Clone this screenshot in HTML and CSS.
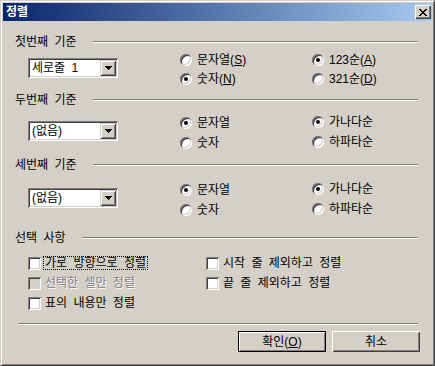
FILE: index.html
```html
<!DOCTYPE html>
<html lang="ko">
  <head>
    <meta charset="UTF-8" />
    <title>정렬</title>
    <link rel="stylesheet" href="styles.css">
  </head>
  <body>
    <div class="window">
      <div class="titlebar">
        <span class="title">정렬</span>
        <span class="close-btn">
          <svg width="8" height="7" viewBox="0 0 8 7" shape-rendering="crispEdges">
            <path d="M0 0h2v1h-2zM6 0h2v1h-2zM1 1h2v1h-2zM5 1h2v1h-2zM2 2h4v1h-4zM3 3h2v1h-2zM2 4h4v1h-4zM1 5h2v1h-2zM5 5h2v1h-2zM0 6h2v1h-2zM6 6h2v1h-2z" fill="#000"/>
          </svg>
        </span>
      </div>

      <div class="content">
        <section class="group group-1">
          <div class="group-head"><span>첫번째 기준</span></div>
          <div class="group-row">
            <div class="combo">
              <span class="combo-text">세로줄 1</span>
              <span class="combo-btn"><svg width="7" height="4" viewBox="0 0 7 4" shape-rendering="crispEdges"><path d="M0 0h7v1h-7zM1 1h5v1h-5zM2 2h3v1h-3zM3 3h1v1h-1z" fill="#000"/></svg></span>
            </div>
            <div class="radio-col">
              <div class="radio-item"><span class="radio"></span><span>문자열(<u>S</u>)</span></div>
              <div class="radio-item"><span class="radio checked"></span><span>숫자(<u>N</u>)</span></div>
            </div>
            <div class="radio-col">
              <div class="radio-item"><span class="radio checked"></span><span>123순(<u>A</u>)</span></div>
              <div class="radio-item"><span class="radio"></span><span>321순(<u>D</u>)</span></div>
            </div>
          </div>
        </section>

        <section class="group group-2">
          <div class="group-head"><span>두번째 기준</span></div>
          <div class="group-row">
            <div class="combo">
              <span class="combo-text">(없음)</span>
              <span class="combo-btn"><svg width="7" height="4" viewBox="0 0 7 4" shape-rendering="crispEdges"><path d="M0 0h7v1h-7zM1 1h5v1h-5zM2 2h3v1h-3zM3 3h1v1h-1z" fill="#000"/></svg></span>
            </div>
            <div class="radio-col">
              <div class="radio-item"><span class="radio checked"></span><span>문자열</span></div>
              <div class="radio-item"><span class="radio"></span><span>숫자</span></div>
            </div>
            <div class="radio-col shifted">
              <div class="radio-item"><span class="radio checked"></span><span>가나다순</span></div>
              <div class="radio-item"><span class="radio"></span><span>하파타순</span></div>
            </div>
          </div>
        </section>

        <section class="group group-3">
          <div class="group-head"><span>세번째 기준</span></div>
          <div class="group-row">
            <div class="combo">
              <span class="combo-text">(없음)</span>
              <span class="combo-btn"><svg width="7" height="4" viewBox="0 0 7 4" shape-rendering="crispEdges"><path d="M0 0h7v1h-7zM1 1h5v1h-5zM2 2h3v1h-3zM3 3h1v1h-1z" fill="#000"/></svg></span>
            </div>
            <div class="radio-col">
              <div class="radio-item"><span class="radio checked"></span><span>문자열</span></div>
              <div class="radio-item"><span class="radio"></span><span>숫자</span></div>
            </div>
            <div class="radio-col shifted">
              <div class="radio-item"><span class="radio checked"></span><span>가나다순</span></div>
              <div class="radio-item"><span class="radio"></span><span>하파타순</span></div>
            </div>
          </div>
        </section>

        <section class="group group-4">
          <div class="group-head"><span>선택 사항</span></div>
          <div class="check-grid">
            <div class="check-item"><span class="check"></span><span class="focus">가로 방향으로 정렬</span></div>
            <div class="check-item"><span class="check"></span><span>시작 줄 제외하고 정렬</span></div>
            <div class="check-item disabled"><span class="check"></span><span>선택한 셀만 정렬</span></div>
            <div class="check-item"><span class="check"></span><span>끝 줄 제외하고 정렬</span></div>
            <div class="check-item"><span class="check"></span><span>표의 내용만 정렬</span></div>
          </div>
        </section>

        <div class="sep"></div>

        <div class="buttons">
          <button class="btn default">확인(<u>O</u>)</button>
          <button class="btn">취소</button>
        </div>
      </div>
    </div>
  </body>
</html>
```

FILE: styles.css
```css
body {
  margin: 0;
  font-family: "Liberation Sans", "Noto Sans CJK KR", sans-serif;
  font-size: 12px;
  line-height: 1;
  word-spacing: 3px;
  color: #000;
}
.window {
  width: 435px;
  height: 366px;
  box-sizing: border-box;
  background: #d4d0c8;
  border: 1px solid;
  border-color: #d4d0c8 #404040 #404040 #d4d0c8;
  box-shadow: inset 1px 1px #fff, inset -1px -1px #808080;
  padding: 2px;
  display: flex;
  flex-direction: column;
}
.titlebar {
  height: 18px;
  flex: none;
  display: flex;
  align-items: center;
  justify-content: space-between;
  padding: 0 1px 0 3px;
  background: linear-gradient(to right, #0a246a, #a6caf0);
}
.title {
  color: #fff;
  font-weight: bold;
}
.close-btn {
  width: 16px;
  height: 14px;
  box-sizing: border-box;
  display: flex;
  align-items: center;
  justify-content: center;
  background: #d4d0c8;
  box-shadow: inset 1px 1px #fff, inset -1px -1px #404040, inset -2px -2px #808080;
}
.close-btn svg {
  display: block;
}
.content {
  padding: 14px 14px 0 12px;
}
.group-head {
  height: 14px;
  display: flex;
  align-items: center;
}
.group-head::after {
  content: "";
  flex: 1;
  margin-left: 16px;
  border-top: 1px solid #808080;
  border-bottom: 1px solid #fff;
}
.group-1 { height: 58px; }
.group-2 { height: 65px; }
.group-3 { height: 73px; }
.group-row {
  display: grid;
  grid-template-columns: 165px 132px 1fr;
  align-items: start;
}
.group-1 .group-row { padding-top: 1px; }
.group-2 .group-row { padding-top: 6px; }
.group-3 .group-row { padding-top: 8px; }
.group-1 .radio-item { height: 19px; }
.combo {
  width: 90px;
  height: 20px;
  box-sizing: border-box;
  margin: 8px 0 0 13px;
  padding: 2px;
  background: #fff;
  box-shadow: inset 1px 1px #808080, inset -1px -1px #fff,
    inset 2px 2px #404040, inset -2px -2px #d4d0c8;
  display: flex;
  align-items: center;
}
.combo-text {
  flex: 1;
  padding-left: 2px;
}
.combo-btn {
  width: 16px;
  height: 16px;
  box-sizing: border-box;
  display: flex;
  align-items: center;
  justify-content: center;
  background: #d4d0c8;
  box-shadow: inset 1px 1px #d4d0c8, inset -1px -1px #404040,
    inset 2px 2px #fff, inset -2px -2px #808080;
}
.combo-btn svg {
  display: block;
}
.radio-col.shifted {
  margin-top: -1px;
}
.radio-item {
  height: 20px;
  display: flex;
  align-items: center;
  gap: 5px;
}
.radio {
  width: 12px;
  height: 12px;
  flex: none;
  border-radius: 50%;
  background: #fff;
  box-shadow: inset 1px 1px #808080, inset -1px -1px #fff,
    inset 2px 2px #404040, inset -2px -2px #d4d0c8;
  position: relative;
}
.radio.checked::after {
  content: "";
  position: absolute;
  left: 4px;
  top: 4px;
  width: 4px;
  height: 4px;
  border-radius: 50%;
  background: #000;
}
.check-grid {
  display: grid;
  grid-template-columns: 178px 1fr;
  padding: 8px 0 0 13px;
}
.check-item {
  height: 20px;
  display: flex;
  align-items: center;
  gap: 4px;
}
.check {
  width: 13px;
  height: 13px;
  flex: none;
  background: #fff;
  box-shadow: inset 1px 1px #808080, inset -1px -1px #fff,
    inset 2px 2px #404040, inset -2px -2px #d4d0c8;
}
.check-item.disabled {
  color: #808080;
  text-shadow: 1px 1px #fff;
}
.check-item.disabled .check {
  background: #d4d0c8;
}
.focus {
  outline: 1px dotted #000;
  outline-offset: 0;
  padding: 0 1px;
  margin-left: -1px;
}
.group-4 {
  height: 92px;
}
.sep {
  margin: 0 0 6px 3px;
  border-top: 1px solid #808080;
  border-bottom: 1px solid #fff;
}
.buttons {
  display: flex;
  justify-content: flex-end;
  gap: 6px;
  margin-right: -2px;
}
.btn {
  width: 88px;
  height: 21px;
  box-sizing: border-box;
  border: none;
  padding: 0;
  font: inherit;
  word-spacing: inherit;
  color: #000;
  background: #d4d0c8;
  box-shadow: inset 1px 1px #fff, inset -1px -1px #404040,
    inset 2px 2px #d4d0c8, inset -2px -2px #808080;
}
.btn.default {
  border: 1px solid #000;
  box-shadow: inset 1px 1px #fff, inset -1px -1px #808080;
}
```
